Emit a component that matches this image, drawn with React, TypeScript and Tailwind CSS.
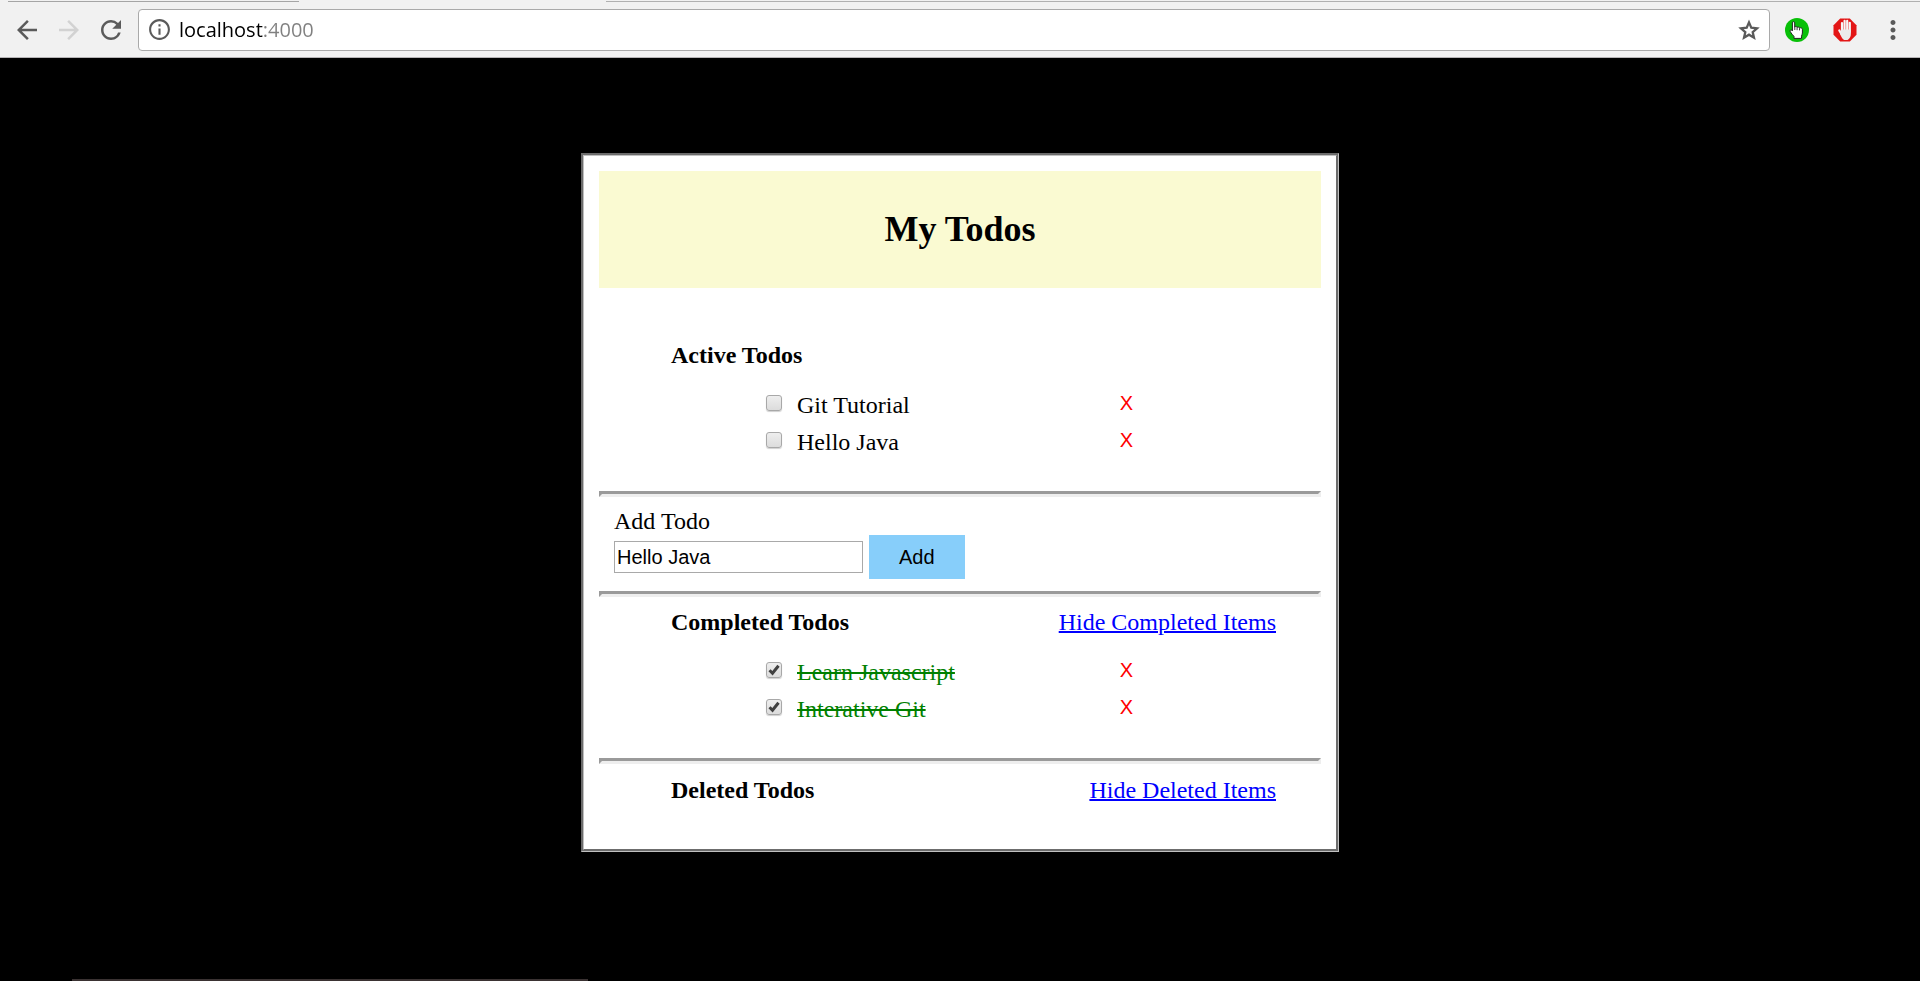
import { useState } from "react";
import { MdArrowBack, MdArrowForward, MdInfoOutline, MdMoreVert, MdRefresh } from "react-icons/md";

type Status = "active" | "completed" | "deleted";

interface Todo {
  id: number;
  title: string;
  status: Status;
}

const initialTodos: Todo[] = [
  { id: 1, title: "Git Tutorial", status: "active" },
  { id: 2, title: "Hello Java", status: "active" },
  { id: 3, title: "Learn Javascript", status: "completed" },
  { id: 4, title: "Interative Git", status: "completed" },
];

const titleStyles: Record<Status, string> = {
  active: "text-black",
  completed: "text-[#008000] line-through decoration-2",
  deleted: "text-[#ff0000] line-through decoration-2",
};

function StarIcon() {
  return (
    <svg width="26" height="26" viewBox="0 0 24 24" aria-hidden="true">
      <path
        d="M12 5l2.100 4.900 5.300.5-4 3.500 1.200 5.200L12 16.300l-4.600 2.800 1.200-5.200-4-3.500 5.300-.5z"
        fill="none"
        stroke="currentColor"
        strokeWidth="2.100"
      />
    </svg>
  );
}

function PointerIcon() {
  return (
    <svg width="24" height="24" viewBox="0 0 24 24" aria-hidden="true">
      <circle cx="12" cy="12" r="12" fill="#08c008" />
      <path
        d="M7.400 4.800c0-1.500 2.300-1.500 2.300 0v4.200c.6-.8 2.200-.6 2.400.4.7-.7 2.200-.4 2.400.6.900-.6 2.900-.1 2.900 1.300v3.700c0 1.400-.8 2.200-.9 3.200v2.200H9v-2c-1.400-1.300-2.700-3-3.700-4.700-.8-1.500.9-2.300 1.800-1.200l.3.400z"
        fill="#fff"
        stroke="#222"
        strokeWidth="1"
        strokeLinejoin="round"
      />
      <path d="M9.800 9v3M12.100 9.400v2.800M14.500 10.200v2.200" stroke="#222" strokeWidth=".9" fill="none" />
    </svg>
  );
}

function StopHandIcon() {
  return (
    <svg width="24" height="24" viewBox="0 0 24 24" aria-hidden="true">
      <path d="M7.200.5h9.600l6.700 6.700v9.600l-6.700 6.700H7.200L.5 16.800V7.200z" fill="#e31616" />
      <g stroke="#f6f6f6" strokeWidth="2.200" strokeLinecap="round" fill="none">
        <path d="M9 5v9M11.600 2.800V14M14.200 2.800V14M16.800 4.800V14" />
        <path d="M6.300 12.500l2.700 4.500" />
      </g>
      <path d="M7.900 11.500h10v4.600c0 2.600-1.700 5.300-3.300 5.900h-3.400C9.700 21.200 8.300 19 7.300 16.500z" fill="#ececec" />
    </svg>
  );
}

function BrowserBar() {
  const [url, setUrl] = useState("localhost:4000");
  return (
    <header className="bg-[#f1f1f1]">
      <div className="flex h-[2px] items-end bg-[#f1f1f1]">
        <div className="ml-2 h-px w-[291px] bg-[#a5a5a5]" />
        <div className="ml-[307px] h-px flex-1 bg-[#b0b0b0]" />
      </div>
      <nav className="flex h-14 items-center border-b border-[#b6b4b6] px-3 text-[#5a5a5a]">
        <button type="button" aria-label="Back" className="mr-3 flex size-[30px] items-center justify-center">
          <MdArrowBack size={30} />
        </button>
        <button
          type="button"
          aria-label="Forward"
          className="mr-3 flex size-[30px] items-center justify-center text-[#d2d2d2]"
        >
          <MdArrowForward size={30} />
        </button>
        <button type="button" aria-label="Reload" className="mr-3 flex size-[30px] items-center justify-center">
          <MdRefresh size={30} />
        </button>
        <div className="flex h-[42px] flex-1 items-center rounded-[4px] border border-[#a9a9a9] bg-white pr-[7px] pl-2">
          <MdInfoOutline size={25} className="shrink-0" />
          <input
            type="text"
            aria-label="Address"
            spellCheck={false}
            value={url}
            onChange={(e) => setUrl(e.target.value)}
            className="ml-[7px] min-w-0 flex-1 bg-[linear-gradient(to_right,#000_84px,#808080_84px)] bg-clip-text font-['Open_Sans',sans-serif] text-[20px] leading-[30px] text-transparent caret-black outline-none"
          />
          <button type="button" aria-label="Bookmark this page">
            <StarIcon />
          </button>
        </div>
        <button type="button" aria-label="Pointer extension" className="ml-[15px]">
          <PointerIcon />
        </button>
        <button type="button" aria-label="Ad blocker extension" className="ml-6">
          <StopHandIcon />
        </button>
        <button type="button" aria-label="Menu" className="ml-[21px]">
          <MdMoreVert size={30} />
        </button>
      </nav>
    </header>
  );
}

interface TodoItemProps {
  todo: Todo;
  onToggle: () => void;
  onRemove: () => void;
}

function TodoItem({ todo, onToggle, onRemove }: TodoItemProps) {
  const id = `todo-${todo.id}`;
  return (
    <li className="flex items-start">
      <span className="relative mt-2 size-4 shrink-0">
        <input
          id={id}
          type="checkbox"
          checked={todo.status === "completed"}
          onChange={onToggle}
          className="peer block size-4 appearance-none rounded-[3px] border border-[#a8a8a8] bg-linear-to-b from-[#eeeeee] to-[#dcdcdc] shadow-[0_1px_1px_#d0d0d0]"
        />
        <svg
          viewBox="0 0 16 16"
          aria-hidden="true"
          className="pointer-events-none absolute inset-0 hidden size-4 peer-checked:block"
        >
          <path d="M3.500 8.300l3 3L12.500 3.800" fill="none" stroke="#404040" strokeWidth="3" />
        </svg>
      </span>
      <label htmlFor={id} className={`ml-[15px] flex-1 leading-[37px] ${titleStyles[todo.status]}`}>
        {todo.title}
      </label>
      <button
        type="button"
        onClick={onRemove}
        className="mt-1 font-['Liberation_Sans',Arial,sans-serif] text-[20px] leading-6 text-[#ff0000]"
      >
        X
      </button>
    </li>
  );
}

interface TodoSectionProps {
  heading: string;
  todos: Todo[];
  toggleLabel?: string;
  onToggle: (todo: Todo) => void;
  onRemove: (todo: Todo) => void;
}

function TodoSection({ heading, todos, toggleLabel, onToggle, onRemove }: TodoSectionProps) {
  const [open, setOpen] = useState(true);
  return (
    <section className="pb-[30px]">
      <div className="flex justify-between pr-[45px] pl-[72px] leading-7">
        <h2 className="font-bold">{heading}</h2>
        {toggleLabel && (
          <a
            href="#"
            onClick={(e) => {
              e.preventDefault();
              setOpen(!open);
            }}
            className="text-[#0000ff] underline decoration-2"
          >
            {open ? `Hide ${toggleLabel}` : `Show ${toggleLabel}`}
          </a>
        )}
      </div>
      {open && todos.length > 0 && (
        <ul className="mt-[18px] pr-[188px] pl-[167px]">
          {todos.map((todo) => (
            <TodoItem key={todo.id} todo={todo} onToggle={() => onToggle(todo)} onRemove={() => onRemove(todo)} />
          ))}
        </ul>
      )}
    </section>
  );
}

function Divider() {
  return <hr className="h-[6px] border-[3px] border-[#eeeeee] [border-style:inset]" />;
}

export default function App() {
  const [todos, setTodos] = useState(initialTodos);
  const [draft, setDraft] = useState("Hello Java");

  const setStatus = (id: number, status: Status) =>
    setTodos((all) => all.map((t) => (t.id === id ? { ...t, status } : t)));

  const sectionProps = (status: Status) => ({
    todos: todos.filter((t) => t.status === status),
    onToggle: (t: Todo) => setStatus(t.id, t.status === "active" ? "completed" : "active"),
    onRemove: (t: Todo) =>
      t.status === "deleted" ? setTodos((all) => all.filter((o) => o.id !== t.id)) : setStatus(t.id, "deleted"),
  });

  return (
    <div className="flex min-h-screen flex-col bg-black">
      <BrowserBar />
      <main className="flex-1 py-[95px] font-['Liberation_Serif','Times_New_Roman',serif] text-[24px] text-black">
        <div className="mx-auto w-full max-w-[758px] border-[3px] border-[#c0c0c0] bg-white p-[15px] [border-style:groove]">
          <h1 className="bg-[#fafad2] py-[38px] text-center text-[36px] leading-[41px] font-bold">My Todos</h1>
          <div className="pt-[53px]">
            <TodoSection heading="Active Todos" {...sectionProps("active")} />
          </div>
          <Divider />
          <form
            className="px-[15px] pt-[10px] pb-3"
            onSubmit={(e) => {
              e.preventDefault();
              if (draft.trim()) {
                setTodos((all) => [...all, { id: Date.now(), title: draft, status: "active" }]);
              }
            }}
          >
            <label htmlFor="new-todo" className="block leading-7">
              Add Todo
            </label>
            <div className="flex items-center gap-[6px] font-['Liberation_Sans',Arial,sans-serif] text-[20px]">
              <input
                id="new-todo"
                type="text"
                value={draft}
                onChange={(e) => setDraft(e.target.value)}
                className="h-8 w-[249px] border border-[#a9a9a9] bg-white px-[2px]"
              />
              <button type="submit" className="h-11 bg-[#87cefa] px-[30px]">
                Add
              </button>
            </div>
          </form>
          <Divider />
          <div className="pt-[11px]">
            <TodoSection heading="Completed Todos" toggleLabel="Completed Items" {...sectionProps("completed")} />
          </div>
          <Divider />
          <div className="pt-3">
            <TodoSection heading="Deleted Todos" toggleLabel="Deleted Items" {...sectionProps("deleted")} />
          </div>
        </div>
      </main>
      <div className="ml-[72px] h-[2px] w-[516px] bg-[#3a3232]" />
    </div>
  );
}
